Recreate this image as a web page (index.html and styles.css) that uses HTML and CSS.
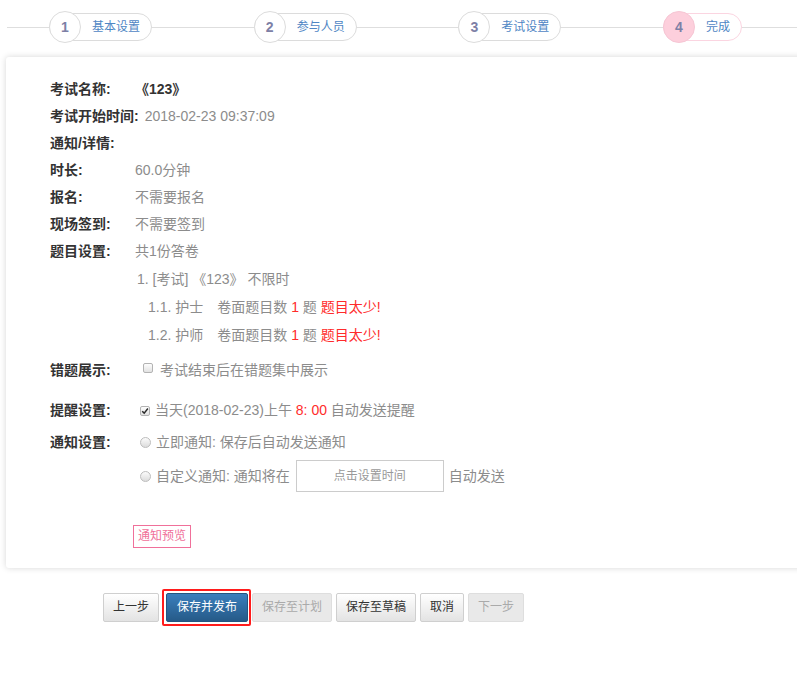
FILE: index.html
```html
<!DOCTYPE html>
<html lang="zh-CN">
<head>
<meta charset="utf-8">
<title>完成</title>
<link rel="stylesheet" href="styles.css">
</head>
<body>
<div class="stepper">
  <div class="step-cell"><div class="step"><span class="num">1</span><span class="step-text">基本设置</span></div></div>
  <div class="step-cell"><div class="step"><span class="num">2</span><span class="step-text">参与人员</span></div></div>
  <div class="step-cell"><div class="step"><span class="num">3</span><span class="step-text">考试设置</span></div></div>
  <div class="step-cell"><div class="step active"><span class="num">4</span><span class="step-text">完成</span></div></div>
</div>

<div class="card">
  <div class="row"><span class="lbl">考试名称:</span><span class="val strong">《123》</span></div>
  <div class="row"><span class="lbl">考试开始时间:</span><span class="val">2018-02-23 09:37:09</span></div>
  <div class="row"><span class="lbl">通知/详情:</span></div>
  <div class="row"><span class="lbl">时长:</span><span class="val">60.0分钟</span></div>
  <div class="row"><span class="lbl">报名:</span><span class="val">不需要报名</span></div>
  <div class="row"><span class="lbl">现场签到:</span><span class="val">不需要签到</span></div>
  <div class="row"><span class="lbl">题目设置:</span><span class="val">共1份答卷</span></div>
  <div class="row sub sub1"><span class="val">1. [考试] 《123》 不限时</span></div>
  <div class="row sub sub2"><span class="val">1.1. 护士<span class="gap"></span>卷面题目数 <span class="red">1</span> 题 <span class="red">题目太少!</span></span></div>
  <div class="row sub sub2"><span class="val">1.2. 护师<span class="gap"></span>卷面题目数 <span class="red">1</span> 题 <span class="red">题目太少!</span></span></div>

  <div class="row r-wrong"><span class="lbl">错题展示:</span><span class="cb cb-top"></span><span class="val">考试结束后在错题集中展示</span></div>
  <div class="row r-remind"><span class="lbl">提醒设置:</span><span class="cb checked"><svg viewBox="0 0 10 10" width="8" height="8"><path d="M1.5 5.2 L4 7.6 L8.6 1.8" fill="none" stroke="#2a2a2a" stroke-width="1.8"/></svg></span><span class="val">当天(2018-02-23)上午 <span class="red">8: 00</span> 自动发送提醒</span></div>
  <div class="row r-notify"><span class="lbl">通知设置:</span><span class="radio"></span><span class="val">立即通知: 保存后自动发送通知</span></div>
  <div class="row r-custom"><span class="lbl"></span><span class="radio"></span><span class="val">自定义通知: 通知将在</span><span class="timebox">点击设置时间</span><span class="val">自动发送</span></div>

  <div class="preview-row"><span class="preview">通知预览</span></div>
</div>

<div class="actions">
  <span class="btn">上一步</span>
  <span class="mark"><span class="btn primary">保存并发布</span></span>
  <span class="btn disabled">保存至计划</span>
  <span class="btn">保存至草稿</span>
  <span class="btn">取消</span>
  <span class="btn disabled">下一步</span>
</div>
</body>
</html>
```

FILE: styles.css
```css
* { box-sizing: border-box; }
html, body { margin: 0; padding: 0; overflow: hidden; background: #fff; }
body {
  width: 797px;
  height: 696px;
  font-family: "Liberation Sans", "Noto Sans CJK SC", sans-serif;
  font-size: 14px;
  color: #333;
}

/* stepper */
.stepper {
  margin: 11px 0 0 7px;
  height: 32px;
  padding-left: 42px;
  display: flex;
  align-items: center;
  background: linear-gradient(#dedede, #dedede) no-repeat 0 16px / 100% 1px;
}
.step-cell { width: 204.67px; flex: none; display: flex; }
.step {
  display: flex;
  align-items: center;
  height: 28px;
  border: 1px solid #dcdcdc;
  border-radius: 14px;
  background: #fff;
  padding-right: 11px;
}
.num {
  flex: none;
  width: 32px;
  height: 32px;
  margin-left: -1px;
  border: 1px solid #dcdcdc;
  border-radius: 50%;
  background: #fff;
  display: flex;
  align-items: center;
  justify-content: center;
  font-weight: bold;
  font-size: 14px;
  color: #7d80a6;
}
.step-text {
  margin-left: 11px;
  font-size: 12px;
  color: #4f86c4;
  line-height: 16px;
}
.step.active { border-color: #fbd5e1; }
.step.active .num { background: #fdcfdc; border-color: #f6c6d4; }

/* card */
.card {
  margin: 14px -30px 0 6px;
  padding: 19px 0 20px 44px;
  background: #fff;
  border-radius: 3px;
  box-shadow: 0 0 6px rgba(0, 0, 0, 0.16);
}
.row {
  display: flex;
  align-items: center;
  height: 27px;
  line-height: 27px;
  white-space: nowrap;
}
.lbl {
  flex: none;
  min-width: 85px;
  padding-right: 6px;
  font-weight: bold;
  color: #333;
}
.val { color: #8c8c8c; }
.val.strong { color: #333; font-weight: bold; }
.red { color: #ff2b2b; }
.sub { height: 28px; line-height: 28px; }
.sub1 { padding-left: 87px; }
.sub2 { padding-left: 98px; }
.gap { display: inline-block; width: 14px; }

.r-wrong { margin-top: 8px; }
.r-remind { margin-top: 13px; }
.r-notify { margin-top: 5px; }
.r-custom { margin-top: 4px; height: 32px; }

.cb {
  flex: none;
  width: 10px;
  height: 10px;
  margin: 0 5px 0 5px;
  border: 1px solid #b3b3b3;
  border-radius: 2px;
  background: linear-gradient(#fdfdfd, #e2e2e2);
  display: flex;
  align-items: center;
  justify-content: center;
}
.cb-top { align-self: flex-start; margin: 6px 7px 0 8px; }
.radio {
  flex: none;
  width: 11px;
  height: 11px;
  margin: 0 5px 0 5px;
  border: 1px solid #bdbdbd;
  border-radius: 50%;
  background: linear-gradient(#fbfbfb, #dcdcdc);
}
.timebox {
  flex: none;
  width: 148px;
  height: 32px;
  margin: 0 5px 0 6px;
  border: 1px solid #cccccc;
  display: flex;
  align-items: center;
  justify-content: center;
  font-size: 12px;
  color: #999;
}

.preview-row { margin-top: 33px; padding-left: 83px; height: 23px; }
.preview {
  display: inline-block;
  height: 23px;
  line-height: 21px;
  padding: 0 4px;
  border: 1px solid #f0709a;
  color: #f0709a;
  font-size: 12px;
}

/* actions */
.actions {
  margin: 21px 0 0 103px;
  display: flex;
  align-items: center;
}
.btn {
  display: inline-block;
  height: 29px;
  line-height: 27px;
  padding: 0 9px;
  border: 1px solid #cfcfcf;
  border-radius: 2px;
  background: linear-gradient(#ffffff, #e3e3e3);
  font-size: 12px;
  color: #333;
  margin-right: 4px;
  white-space: nowrap;
}
.btn.primary {
  margin-right: 0;
  padding: 0 10px;
  color: #fff;
  border-color: #245580;
  background: linear-gradient(#3a7fbd, #265a88);
}
.btn.disabled {
  color: #aaa;
  border-color: #dedede;
  background: #e9e9e9;
}
.mark {
  display: inline-flex;
  border: 2px solid #ff1c1c;
  border-radius: 2px;
  padding: 2px 1px 2px 2px;
  margin: 0 1px 0 -1px;
}
```
